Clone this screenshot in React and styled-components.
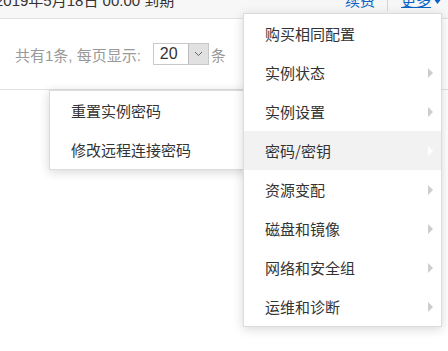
import React from 'react';
import styled, { createGlobalStyle, css } from 'styled-components';

const GlobalStyle = createGlobalStyle`
  html, body {
    margin: 0;
    padding: 0;
    background: #fff;
  }
  body {
    font-family: 'Liberation Sans', 'Noto Sans CJK SC', sans-serif;
    font-size: 15px;
    color: #333;
    overflow: hidden;
  }
`;

const Page = styled.div`
  position: relative;
  width: 448px;
  height: 351px;
  overflow: hidden;
  background: #fff;
`;

const TopBar = styled.div`
  box-sizing: border-box;
  height: 19px;
  padding: 0 6px 7px 0;
  background: #f7f7f7;
  border-bottom: 1px solid #e2e2e2;
  display: flex;
  align-items: flex-end;
  justify-content: space-between;
  overflow: hidden;
  line-height: 20px;
`;

const ExpireText = styled.span`
  margin-left: -5px;
  color: #333;
  white-space: nowrap;
`;

const Actions = styled.div`
  display: flex;
  align-items: flex-end;
`;

const ActionLink = styled.a`
  color: #0a62c6;
  text-decoration: ${({ underline }) => (underline ? 'underline' : 'none')};
  white-space: nowrap;
`;

const Divider = styled.span`
  width: 1px;
  height: 20px;
  margin: 0 13px 0 12px;
  background: #d5d5d5;
  align-self: flex-end;
`;

const Caret = styled.svg`
  width: 9px;
  height: 7px;
  margin: 0 0 7px 2px;
`;

const Pager = styled.div`
  box-sizing: border-box;
  height: 71px;
  padding: 0 15px;
  border-bottom: 1px solid #e2e2e2;
  display: flex;
  align-items: center;
  color: #999;
  white-space: nowrap;
`;

const PagerLabel = styled.span`
  margin-right: 12px;
`;

const Select = styled.div`
  box-sizing: border-box;
  width: 56px;
  height: 22px;
  border: 1px solid #c8c8c8;
  display: flex;
  background: #fff;
  margin-right: 2px;
`;

const SelectValue = styled.span`
  flex: 1;
  padding-left: 6px;
  color: #333;
  line-height: 20px;
  font-size: 16px;
`;

const SelectButton = styled.span`
  width: 19px;
  background: #e1e1e1;
  border-left: 1px solid #bdbdbd;
  display: flex;
  align-items: center;
  justify-content: center;
`;

const Menu = styled.ul`
  position: absolute;
  box-sizing: border-box;
  margin: 0;
  padding: 0;
  list-style: none;
  background: #fff;
  border: 1px solid #dcdcdc;
  box-shadow: 0 2px 10px rgba(0, 0, 0, 0.16);
  ${({ sub }) =>
    sub
      ? css`
          left: 49px;
          top: 90px;
          width: 200px;
          z-index: 1;
        `
      : css`
          left: 243px;
          top: 13px;
          width: 199px;
          z-index: 2;
        `}
`;

const Item = styled.li`
  position: relative;
  height: 39px;
  padding-left: 21px;
  display: flex;
  align-items: center;
  font-size: 15px;
  color: #333;
  background: ${({ active }) => (active ? '#f2f2f2' : 'transparent')};
  font-family: 'Noto Sans CJK SC', sans-serif;
`;

const Arrow = styled.span`
  margin-left: auto;
  margin-right: 8px;
  width: 0;
  height: 0;
  border-top: 5px solid transparent;
  border-bottom: 5px solid transparent;
  border-left: 5px solid ${({ active }) => (active ? '#fff' : '#cdcdcd')};
`;

const mainItems = [
  { label: '购买相同配置' },
  { label: '实例状态', sub: true },
  { label: '实例设置', sub: true },
  { label: '密码/密钥', sub: true, active: true },
  { label: '资源变配', sub: true },
  { label: '磁盘和镜像', sub: true },
  { label: '网络和安全组', sub: true },
  { label: '运维和诊断', sub: true },
];

const subItems = ['重置实例密码', '修改远程连接密码'];

export default function App() {
  return (
    <Page>
      <GlobalStyle />
      <TopBar>
        <ExpireText>2019年5月18日 00:00 到期</ExpireText>
        <Actions>
          <ActionLink>续费</ActionLink>
          <Divider />
          <ActionLink underline>更多</ActionLink>
          <Caret viewBox="0 0 9 7">
            <path d="M0 1 L4.5 0 L9 1 L4.5 7 Z" fill="#0a62c6" />
          </Caret>
        </Actions>
      </TopBar>
      <Pager>
        <PagerLabel>共有1条, 每页显示:</PagerLabel>
        <Select>
          <SelectValue>20</SelectValue>
          <SelectButton>
            <svg width="9" height="6" viewBox="0 0 9 6">
              <path d="M1 1 L4.5 4.5 L8 1" fill="none" stroke="#666" strokeWidth="1" />
            </svg>
          </SelectButton>
        </Select>
        <span>条</span>
      </Pager>

      <Menu sub>
        {subItems.map((label) => (
          <Item key={label}>{label}</Item>
        ))}
      </Menu>

      <Menu>
        {mainItems.map((it) => (
          <Item key={it.label} active={it.active}>
            {it.label}
            {it.sub && <Arrow active={it.active} />}
          </Item>
        ))}
      </Menu>
    </Page>
  );
}
